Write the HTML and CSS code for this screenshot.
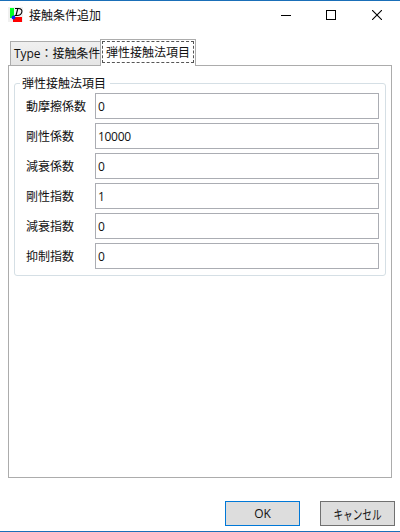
FILE: index.html
```
<!DOCTYPE html>
<html lang="ja">
<head>
    <meta charset="UTF-8">
    <meta name="viewport" content="width=device-width, initial-scale=1.0">
    <title>接触条件追加</title>
    <link rel="stylesheet" href="styles.css">
</head>
<body>
    <div class="window">
        <header class="titlebar">
            <svg class="app-icon" width="15" height="15" viewBox="0 0 15 15">
                <rect width="15" height="15" fill="#f0f0f0"/>
                <rect x="2" y="1" width="4" height="10" fill="#00ff21"/>
                <rect x="5" y="10" width="9" height="5" fill="#ff0000"/>
                <circle cx="5.5" cy="10.5" r="1.9" fill="#0026ff"/>
                <path d="M7 1.5H10.5C16 1.5 14.5 8.5 9 8.5H6.5M9.8 1.5L8 8.5" fill="none" stroke="#000" stroke-width="1.1"/>
            </svg>
            <h1>接触条件追加</h1>
            <div class="controls">
                <svg width="10" height="10" viewBox="0 0 10 10"><path d="M0 5.5H10" stroke="#000"/></svg>
                <svg width="10" height="10" viewBox="0 0 10 10"><rect x="0.5" y="0.5" width="9" height="9" fill="none" stroke="#000"/></svg>
                <svg width="10" height="10" viewBox="0 0 10 10"><path d="M0 0L10 10M10 0L0 10" stroke="#000" stroke-width="1.1"/></svg>
            </div>
        </header>

        <!-- Tabs -->
        <nav class="tabs">
            <div class="tab">Type：接触条件</div>
            <div class="tab selected"><span>弾性接触法項目</span></div>
        </nav>

        <main class="panel">
            <fieldset>
                <legend>弾性接触法項目</legend>
                <label class="row"><span>動摩擦係数</span><input type="text" value="0"></label>
                <label class="row"><span>剛性係数</span><input type="text" value="10000"></label>
                <label class="row"><span>減衰係数</span><input type="text" value="0"></label>
                <label class="row"><span>剛性指数</span><input type="text" value="1"></label>
                <label class="row"><span>減衰指数</span><input type="text" value="0"></label>
                <label class="row"><span>抑制指数</span><input type="text" value="0"></label>
            </fieldset>
        </main>

        <footer>
            <button class="default">OK</button>
            <button><span class="narrow">キャンセル</span></button>
        </footer>
    </div>
</body>
</html>
```

FILE: styles.css
```
* {
    margin: 0;
    padding: 0;
    box-sizing: border-box;
}

body,
input,
button {
    font-family: "Open Sans", "Noto Sans CJK JP", sans-serif;
    font-size: 12px;
    color: #111;
}

.window {
    display: flex;
    flex-direction: column;
    width: 400px;
    height: 532px;
    background: #fff;
    border-top: 1px solid #1a6fb8;
    border-bottom: 1px solid #1a6fb8;
    overflow: hidden;
}

.titlebar {
    display: flex;
    align-items: center;
    height: 28px;
    padding: 0 18px 0 8px;
}

.app-icon {
    margin-bottom: 1px;
}

h1 {
    margin-left: 6px;
    padding-top: 2px;
    font-size: 12px;
    font-weight: normal;
    line-height: 16px;
}

.controls {
    display: flex;
    gap: 36px;
    margin-left: auto;
}

.controls svg:nth-child(2) {
    margin-left: -1px;
}

/* Tabs */
.tabs {
    display: flex;
    align-items: flex-end;
    height: 36px;
    margin: 0 8px;
    padding-left: 2px;
}

.tab {
    width: 91px;
    height: 25px;
    margin-bottom: -1px;
    padding-left: 3px;
    line-height: 24px;
    white-space: nowrap;
    letter-spacing: -0.05px;
    background: linear-gradient(#f0f0f0, #e5e5e5);
    border: 1px solid #acacac;
}

.tab.selected {
    z-index: 1;
    width: 96px;
    height: 27px;
    margin-left: -1px;
    padding: 1px;
    letter-spacing: 0;
    background: #fff;
    border-bottom: none;
}

.tab.selected span {
    display: block;
    height: 22px;
    padding-left: 3px;
    line-height: 22px;
    border: 1px dashed #555;
}

.panel {
    height: 413px;
    margin: 0 8px;
    padding: 9px 5px 0;
    border: 1px solid #acacac;
}

fieldset {
    height: 201px;
    padding: 1px 6px 0 11px;
    border: 1px solid #d5dfe5;
    border-radius: 3px;
}

legend {
    height: 17px;
    margin-left: -6px;
    padding: 0 4px 0 2px;
    line-height: 18px;
}

.row {
    display: flex;
    align-items: center;
    height: 26px;
    margin-bottom: 4px;
}

.row span {
    width: 69px;
}

input {
    flex: 1;
    height: 26px;
    padding: 0 2px;
    letter-spacing: -0.3px;
    background: #fff;
    border: 1px solid #abadb3;
}

footer {
    display: flex;
    justify-content: flex-end;
    gap: 20px;
    margin-top: auto;
    padding: 0 5px 5px;
}

button {
    width: 75px;
    height: 25px;
    background: #ddd;
    border: 1px solid #707070;
}

button.default {
    border-color: #0078d7;
}

.narrow {
    display: inline-block;
    margin: 0 -8px;
    font-size: 13px;
    transform: scaleX(0.74);
}
```
